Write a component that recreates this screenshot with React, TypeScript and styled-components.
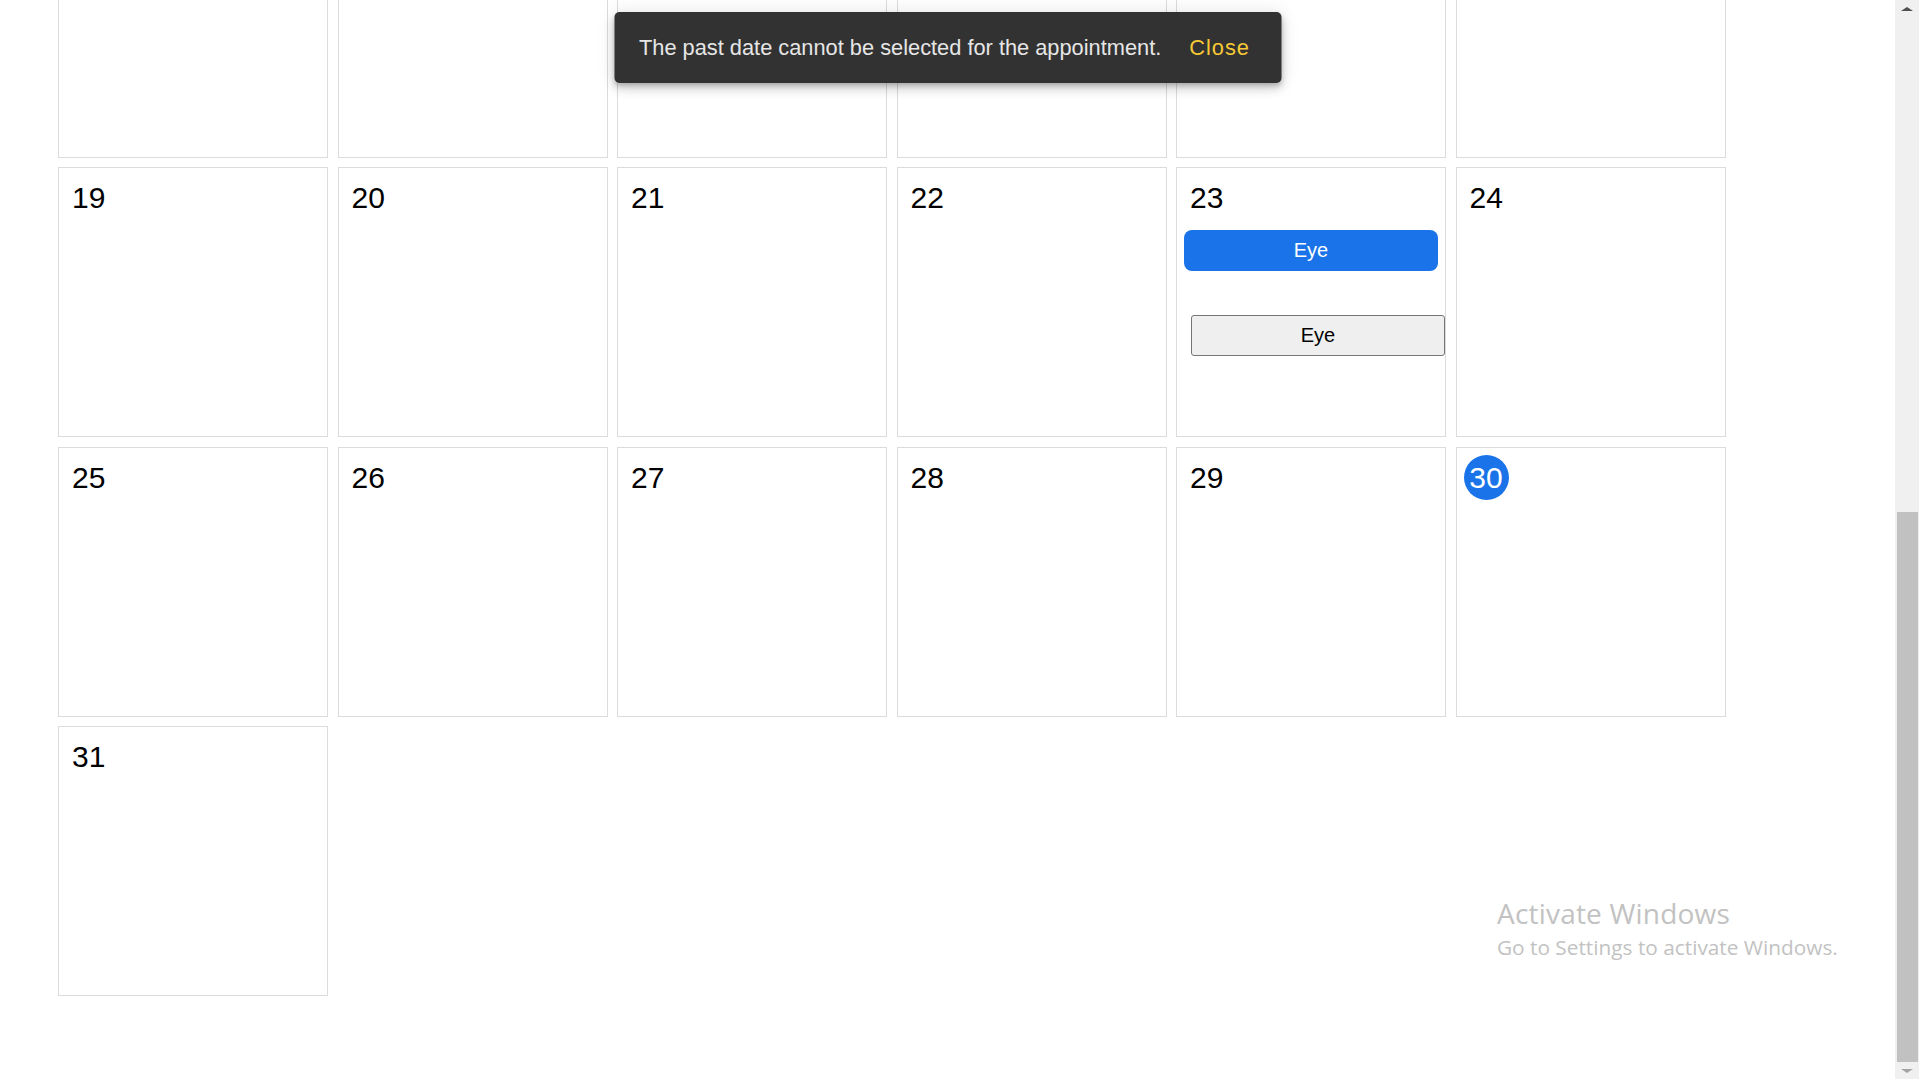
import React from "react";
import styled, { createGlobalStyle } from "styled-components";

const cellSize = 270;
const cellGap = 9.5;
const scrolled = 112.5;

const rows: number[][] = [
  [13, 14, 15, 16, 17, 18],
  [19, 20, 21, 22, 23, 24],
  [25, 26, 27, 28, 29, 30],
  [31],
];

const today = 30;

const appointments: Record<number, { label: string; booked: boolean }[]> = {
  23: [
    { label: "Eye", booked: true },
    { label: "Eye", booked: false },
  ],
};

const GlobalStyle = createGlobalStyle`
  html, body {
    margin: 0;
    padding: 0;
    overflow: hidden;
    background: #ffffff;
  }
  body {
    font-family: "Liberation Sans", Arial, sans-serif;
  }
`;

export default function App() {
  return (
    <>
      <GlobalStyle />
      <Page>
        <Main>
          <Calendar>
            {rows.flat().map((day) => (
              <DayCell key={day}>
                <DayNumber today={day === today}>{day}</DayNumber>
                {(appointments[day] || []).map((a, i) =>
                  a.booked ? (
                    <BookedButton key={i}>{a.label}</BookedButton>
                  ) : (
                    <SlotButton key={i}>{a.label}</SlotButton>
                  )
                )}
              </DayCell>
            ))}
          </Calendar>

          <Snackbar>
            <SnackMessage>The past date cannot be selected for the appointment.</SnackMessage>
            <SnackAction>Close</SnackAction>
          </Snackbar>

          <Watermark>
            <WatermarkTitle>Activate Windows</WatermarkTitle>
            <WatermarkText>Go to Settings to activate Windows.</WatermarkText>
          </Watermark>
        </Main>

        <ScrollTrack>
          <ArrowUp />
          <ThumbArea>
            <Thumb />
          </ThumbArea>
          <ArrowDown />
        </ScrollTrack>
      </Page>
    </>
  );
}

const Page = styled.div`
  display: flex;
  flex-direction: row;
  width: 100vw;
  height: 100vh;
  overflow: hidden;
`;

const Main = styled.main`
  position: relative;
  flex: 1;
  overflow: hidden;
`;

const Calendar = styled.div`
  display: grid;
  grid-template-columns: repeat(6, ${cellSize}px);
  grid-auto-rows: ${cellSize}px;
  gap: ${cellGap}px;
  margin-top: -${scrolled}px;
  padding-left: 58px;
`;

const DayCell = styled.div`
  box-sizing: border-box;
  display: flex;
  flex-direction: column;
  align-items: flex-start;
  padding: 7px;
  border: 1px solid #dcdcdc;
  background: #ffffff;
`;

const DayNumber = styled.span<{ today: boolean }>`
  display: inline-flex;
  align-items: center;
  justify-content: ${(p) => (p.today ? "center" : "flex-start")};
  box-sizing: border-box;
  height: 45px;
  min-width: 45px;
  padding: 0 ${(p) => (p.today ? "4px" : "6px")};
  border-radius: 50%;
  font-size: 30px;
  line-height: 45px;
  color: ${(p) => (p.today ? "#ffffff" : "#000000")};
  background: ${(p) => (p.today ? "#1a73e8" : "transparent")};
`;

const BookedButton = styled.button`
  box-sizing: border-box;
  width: 100%;
  height: 41px;
  margin-top: 10px;
  border: none;
  border-radius: 8px;
  background: #1a73e8;
  color: #ffffff;
  font-family: "Liberation Sans", Arial, sans-serif;
  font-size: 20px;
  cursor: pointer;
`;

const SlotButton = styled.button`
  box-sizing: border-box;
  width: 100%;
  height: 41px;
  flex-shrink: 0;
  margin-top: 44px;
  margin-left: 7px;
  border: 1px solid #767676;
  border-radius: 3px;
  background: #efefef;
  color: #000000;
  font-family: "Liberation Sans", Arial, sans-serif;
  font-size: 20px;
  cursor: pointer;
`;

const Snackbar = styled.div`
  position: absolute;
  top: 12px;
  left: 50%;
  transform: translateX(-50%);
  box-sizing: border-box;
  display: flex;
  align-items: center;
  gap: 28px;
  height: 71px;
  padding: 0 31px 0 25px;
  border-radius: 5px;
  background: #323232;
  box-shadow: 0 3px 5px -1px rgba(0, 0, 0, 0.2), 0 6px 10px 0 rgba(0, 0, 0, 0.14),
    0 1px 18px 0 rgba(0, 0, 0, 0.12);
  white-space: nowrap;
`;

const SnackMessage = styled.span`
  font-size: 21.8px;
  color: #e6e6e6;
`;

const SnackAction = styled.button`
  padding: 0;
  border: none;
  background: none;
  font-family: "Liberation Sans", Arial, sans-serif;
  font-size: 21.8px;
  letter-spacing: 1px;
  color: #f6c935;
  cursor: pointer;
`;

const Watermark = styled.div`
  position: absolute;
  left: 1497px;
  top: 896px;
  display: flex;
  flex-direction: column;
  font-family: "Open Sans", "Noto Sans", sans-serif;
  color: #c2c2c2;
  pointer-events: none;
`;

const WatermarkTitle = styled.span`
  font-size: 28px;
  font-weight: 400;
  letter-spacing: 0.2px;
  line-height: 34px;
`;

const WatermarkText = styled.span`
  font-size: 20.8px;
  font-weight: 400;
  line-height: 34px;
`;

const ScrollTrack = styled.div`
  display: flex;
  flex-direction: column;
  width: 24px;
  height: 100%;
  background: #f0f0f0;
`;

const ArrowUp = styled.div`
  height: 17px;
  flex-shrink: 0;
  display: flex;
  align-items: center;
  justify-content: center;
  &::after {
    content: "";
    border-left: 6px solid transparent;
    border-right: 6px solid transparent;
    border-bottom: 4px solid #505050;
  }
`;

const ArrowDown = styled(ArrowUp)`
  &::after {
    border-bottom: none;
    border-top: 4px solid #a3a3a3;
  }
`;

const ThumbArea = styled.div`
  flex: 1;
  display: flex;
  flex-direction: column;
  justify-content: flex-end;
  padding: 0 1px 0 2px;
`;

const Thumb = styled.div`
  height: 550px;
  background: #c1c1c1;
`;
